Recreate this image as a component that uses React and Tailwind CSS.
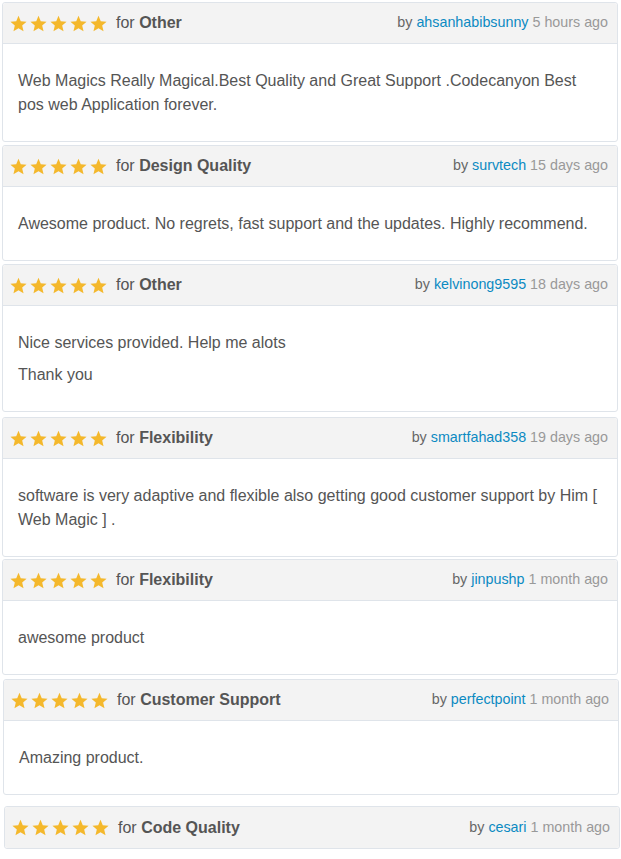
import React from "react";

const reviews = [
  { cat: "Other", user: "ahsanhabibsunny", time: "5 hours ago", body: ["Web Magics Really Magical.Best Quality and Great Support .Codecanyon Best pos web Application forever."], cls: "mt-[2px] ml-[2px] w-[616px]" },
  { cat: "Design Quality", user: "survtech", time: "15 days ago", body: ["Awesome product. No regrets, fast support and the updates. Highly recommend."], cls: "mt-[3px] ml-[2px] w-[616px]" },
  { cat: "Other", user: "kelvinong9595", time: "18 days ago", body: ["Nice services provided. Help me alots", "Thank you"], cls: "mt-[3px] ml-[2px] w-[616px]" },
  { cat: "Flexibility", user: "smartfahad358", time: "19 days ago", body: ["software is very adaptive and flexible also getting good customer support by Him [ Web Magic ] ."], cls: "mt-[5px] ml-[2px] w-[616px]" },
  { cat: "Flexibility", user: "jinpushp", time: "1 month ago", body: ["awesome product"], cls: "mt-[2px] ml-[2px] w-[616px]" },
  { cat: "Customer Support", user: "perfectpoint", time: "1 month ago", body: ["Amazing product."], cls: "mt-[4px] ml-[3px] w-[616px]" },
  { cat: "Code Quality", user: "cesari", time: "1 month ago", body: null, cls: "mt-[11px] ml-[4px] w-[616px]" },
];

function Star() {
  return (
    <svg width="17" height="17" viewBox="0 0 24 24" className="shrink-0">
      <path d="M12 1.2l3.2 7.6 8.2.7-6.2 5.4 1.9 8-7.1-4.3-7.1 4.3 1.9-8L.6 9.5l8.2-.7z" fill="#f4b82c" />
    </svg>
  );
}

function Card({ r }) {
  return (
    <div className={`${r.cls} border border-[#dfe4ea] rounded-[3px] bg-white`}>
      <div className={`h-[41px] flex items-center justify-between pl-[7px] pr-[9px] bg-[#f3f3f3] rounded-t-[3px] ${r.body ? "border-b border-[#dfe4ea]" : "rounded-b-[3px]"}`}>
        <div className="flex items-center">
          <div className="flex items-center gap-[3px]">
            <Star /><Star /><Star /><Star /><Star />
          </div>
          <span className="ml-[9px] text-[16px] text-[#555]">for <b className="font-bold text-[#555]">{r.cat}</b></span>
        </div>
        <div className="text-[14.3px] text-[#666]">
          by <span className="text-[#0b8ac2]">{r.user}</span> <span className="text-[#999]">{r.time}</span>
        </div>
      </div>
      {r.body && (
        <div className="px-[15px] pt-[25px] pb-[24px] flex flex-col gap-[8px]">
          {r.body.map((t, i) => (
            <p key={i} className="text-[16px] leading-[24px] text-[#555]">{t}</p>
          ))}
        </div>
      )}
    </div>
  );
}

export default function App() {
  return (
    <div className="w-[621px] min-h-[859px] bg-white flex flex-col" style={{ fontFamily: '"Liberation Sans", Arial, sans-serif' }}>
      {reviews.map((r, i) => <Card key={i} r={r} />)}
    </div>
  );
}
